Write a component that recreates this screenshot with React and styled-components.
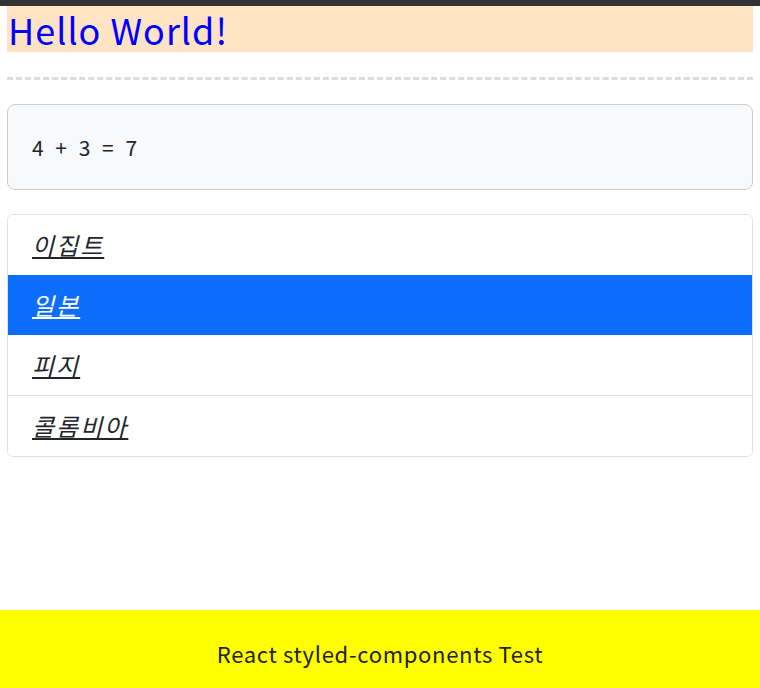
import React from 'react'
import styled, { createGlobalStyle } from 'styled-components'

const GlobalStyle = createGlobalStyle`
    * {
        box-sizing: border-box;
    }
    body {
        margin: 0;
        font-family: "Noto Sans CJK KR", "Noto Sans", sans-serif;
        color: #212529;
        background: #fff;
    }
`

const Page = styled.div`
    display: flex;
    flex-direction: column;
    min-height: 100vh;
    border-top: 6px solid #333;
`

const Main = styled.main`
    padding: 0 7px;
    display: flex;
    flex-direction: column;
`

const Title = styled.h1`
    margin: 0;
    background: bisque;
    color: blue;
    font-size: 36px;
    font-weight: 400;
    line-height: 46px;
    letter-spacing: 1px;
    padding: 0 1px;
`

const Divider = styled.hr`
    width: 100%;
    margin: 25px 0 24px;
    border: none;
    border-top: 3px dashed #ddd;
`

const Result = styled.div`
    background: #f8f9fa;
    border: 1px solid #ccc;
    border-radius: 8px;
    padding: 27px 24px 26px;
    font-size: 21px;
    line-height: 31px;
    letter-spacing: 0.5px;
    word-spacing: 6px;
`

const List = styled.ul`
    list-style: none;
    margin: 24px 0 0;
    padding: 0;
    border: 1px solid #dee2e6;
    border-radius: 6px;
    overflow: hidden;
`

const Item = styled.li`
    padding: 12px 24px;
    font-size: 24px;
    line-height: 36px;
    font-style: italic;
    letter-spacing: 2px;
    background: ${props => props.active ? '#0d6efd' : '#fff'};
    color: ${props => props.active ? '#fff' : '#212529'};
    border-top: ${props => props.divided ? '1px solid #dee2e6' : 'none'};
    a {
        color: inherit;
        text-decoration: underline;
    }
`

const Footer = styled.footer`
    margin-top: auto;
    background: yellow;
    color: #222;
    height: 78px;
    display: flex;
    align-items: center;
    justify-content: center;
    font-size: 22px;
    letter-spacing: 0.7px;
    padding-top: 8px;
`

const countries = ['이집트', '일본', '피지', '콜롬비아']

export default function App() {
    const a = 4
    const b = 3
    return (
        <Page>
            <GlobalStyle />
            <Main>
                <Title>Hello World!</Title>
                <Divider />
                <Result>{a} + {b} = {a + b}</Result>
                <List>
                    {countries.map((name, i) => (
                        <Item key={name} active={i === 1} divided={i === 3}>
                            <a href="#">{name}</a>
                        </Item>
                    ))}
                </List>
            </Main>
            <Footer>React styled-components Test</Footer>
        </Page>
    )
}
